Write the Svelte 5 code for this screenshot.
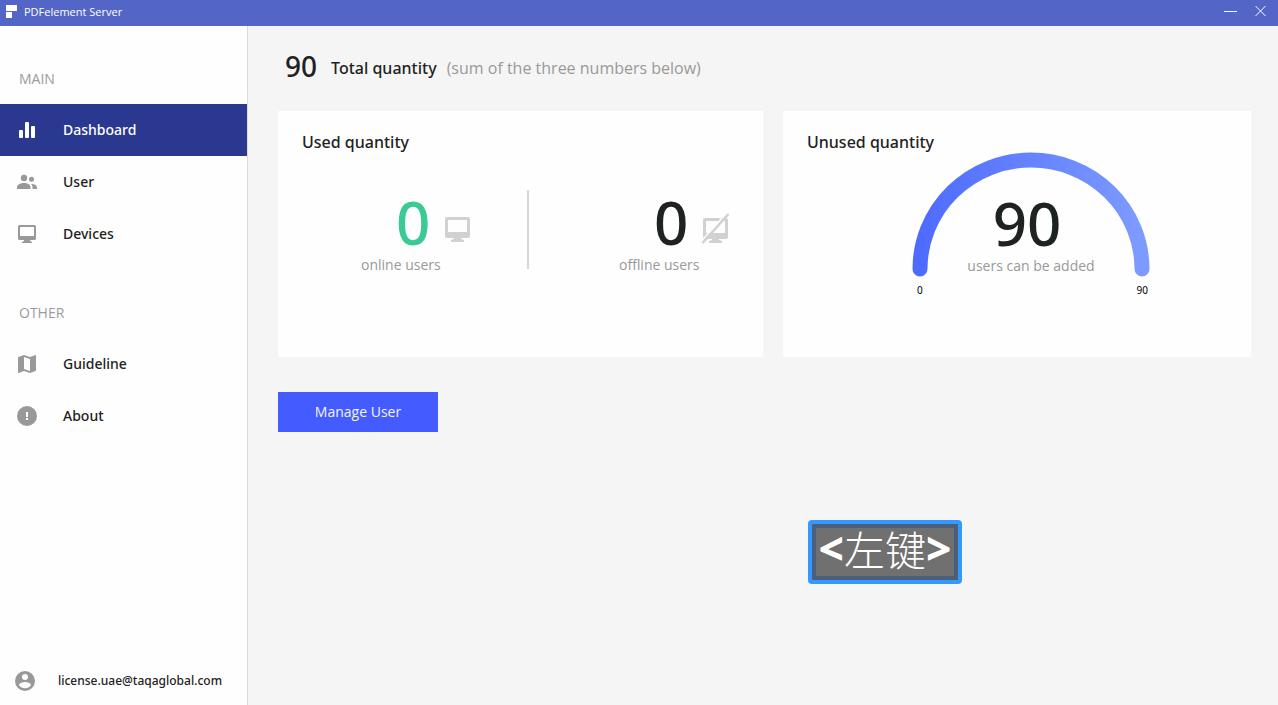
<script>
  const mainLinks = [
    { label: 'Dashboard', icon: 'chart', active: true },
    { label: 'User', icon: 'people' },
    { label: 'Devices', icon: 'monitor' }
  ];
  const otherLinks = [
    { label: 'Guideline', icon: 'map' },
    { label: 'About', icon: 'alert' }
  ];
  const online = 0;
  const offline = 0;
  const unused = 90;
  const total = online + offline + unused;
</script>

{#snippet glyph(name)}
  <svg class="glyph" viewBox="0 0 24 24" aria-hidden="true">
    {#if name === 'chart'}
      <rect x="4" y="12" width="4" height="8" rx="1" />
      <rect x="10" y="4" width="4" height="16" rx="1" />
      <rect x="16" y="8" width="4" height="12" rx="1" />
    {:else if name === 'people'}
      <circle cx="9" cy="8" r="3.2" />
      <circle cx="16.500" cy="9.300" r="2.500" />
      <path d="M2 19v-1.500C2 14.500 5 13 9 13s6.500 1.500 6.500 4.500V19z" />
      <path d="M16.700 14c3.300 0 5.300 1.500 5.300 3.700V19h-4.500v-1.500c0-1.500-.5-2.600-1.500-3.500z" />
    {:else if name === 'monitor'}
      <path fill-rule="evenodd" d="M4.500 3h15A1.500 1.500 0 0 1 21 4.500v12a1.500 1.500 0 0 1-1.500 1.500H15v1l2 1v1H7v-1l2-1v-1H4.500A1.500 1.500 0 0 1 3 16.500v-12A1.500 1.500 0 0 1 4.500 3zM5 5v9h14V5z" />
    {:else if name === 'map'}
      <path fill-rule="evenodd" d="M20.500 3l-5.500 2-6-2-5.600 1.900c-.2.1-.4.3-.4.500v15.100c0 .3.2.5.5.5L9 19l6 2 5.600-1.900c.2-.1.4-.3.4-.5V3.500c0-.3-.2-.5-.5-.5zM15 19l-6-2.100V5l6 2.100z" />
    {:else if name === 'alert'}
      <path fill-rule="evenodd" d="M12 2a10 10 0 1 0 0 20 10 10 0 0 0 0-20zm-1 6h2v5h-2zm0 6h2v2h-2z" />
    {:else}
      <path fill-rule="evenodd" d="M12 2a10 10 0 1 0 0 20 10 10 0 0 0 0-20zm0 3a3 3 0 1 1 0 6 3 3 0 0 1 0-6zm0 14.200a7.200 7.200 0 0 1-6-3.220c.03-1.990 4-3.080 6-3.080s5.970 1.090 6 3.080a7.200 7.200 0 0 1-6 3.220z" />
    {/if}
  </svg>
{/snippet}

{#snippet links(items)}
  <ul>
    {#each items as item}
      <li>
        <a href="#{item.label.toLowerCase()}" class:active={item.active} aria-current={item.active ? 'page' : undefined}>
          {@render glyph(item.icon)}
          <span>{item.label}</span>
        </a>
      </li>
    {/each}
  </ul>
{/snippet}

<div class="window">
  <header class="titlebar">
    <svg class="logo" viewBox="0 0 12 13" aria-hidden="true">
      <path d="M0 0h11v6H0zM0 7h6v6H0z" fill="#fff" />
    </svg>
    <span class="app-name">PDFelement Server</span>
    <button aria-label="Minimize">
      <svg viewBox="0 0 14 14"><path d="M0 6.500h13" /></svg>
    </button>
    <button aria-label="Close">
      <svg viewBox="0 0 14 14"><path d="M1.500 1l10 10M11.500 1L1.500 11" /></svg>
    </button>
  </header>

  <div class="body">
    <nav class="sidebar">
      <h2>MAIN</h2>
      {@render links(mainLinks)}
      <h2 class="second">OTHER</h2>
      {@render links(otherLinks)}
      <div class="account">
        {@render glyph('account')}
        <span>license.uae@taqaglobal.com</span>
      </div>
    </nav>

    <main>
      <div class="summary">
        <strong>{total}</strong>
        <h1>Total quantity</h1>
        <span>(sum of the three numbers below)</span>
      </div>

      <div class="cards">
        <section class="card">
          <h3>Used quantity</h3>
          <div class="stats">
            <div class="stat">
              <div class="figure">
                <span class="number online">{online}</span>
                <svg class="device" viewBox="0 0 30 32" aria-hidden="true">
                  <path fill-rule="evenodd" d="M3 4h21a2 2 0 0 1 2 2v17a2 2 0 0 1-2 2h-7v1l3 1v2H7v-2l3-1v-1H3a2 2 0 0 1-2-2V6a2 2 0 0 1 2-2zM4 7v12h19V7z" />
                </svg>
              </div>
              <p>online users</p>
            </div>
            <div class="divider"></div>
            <div class="stat">
              <div class="figure">
                <span class="number">{offline}</span>
                <svg class="device" viewBox="0 0 30 32" aria-hidden="true">
                  <path fill-rule="evenodd" d="M3 5h21a2 2 0 0 1 2 2v17a2 2 0 0 1-2 2h-7v1l3 1v2H7v-2l3-1v-1H3a2 2 0 0 1-2-2V7a2 2 0 0 1 2-2zM4 8v12h19V8z" />
                  <path d="M-1 28.500L25 -.500" stroke="#fefefe" stroke-width="1.500" />
                  <path d="M.5 30L26.500 1" stroke="#d1d1d1" stroke-width="2.600" />
                </svg>
              </div>
              <p>offline users</p>
            </div>
          </div>
        </section>

        <section class="card unused">
          <h3>Unused quantity</h3>
          <div class="gauge">
            <svg viewBox="0 0 238 124" aria-hidden="true">
              <defs>
                <linearGradient id="arc">
                  <stop offset="0" stop-color="#4e6bff" />
                  <stop offset="1" stop-color="#7d9bff" />
                </linearGradient>
              </defs>
              <path d="M8 116A111 109 0 0 1 230 116" fill="none" stroke="url(#arc)" stroke-width="15" stroke-linecap="round" />
            </svg>
            <div class="reading">
              <span class="number">{unused}</span>
              <p>users can be added</p>
            </div>
            <div class="scale"><span>0</span><span>{unused}</span></div>
          </div>
        </section>
      </div>

      <button class="manage">Manage User</button>
    </main>
  </div>

  <div class="key-hint"><b>&lt;</b><span lang="zh">左键</span><b>&gt;</b></div>
</div>

<style>
  :global(body) {
    margin: 0;
  }
  .window {
    position: relative;
    display: flex;
    flex-direction: column;
    min-height: 100vh;
    background: #f5f5f5;
    color: #1f2222;
    font-family: "Noto Sans", sans-serif;
  }
  .titlebar {
    display: flex;
    align-items: center;
    box-sizing: border-box;
    height: 26px;
    padding: 0 10px 2px 6px;
    background: #5465c8;
    color: #fff;
  }
  .logo {
    width: 12px;
    height: 13px;
    margin: 0 6px 2px 0;
  }
  .app-name {
    flex: 1;
    font: 400 11px/22px "Open Sans", sans-serif;
  }
  .titlebar button {
    display: flex;
    margin-left: 16px;
    padding: 0;
    border: 0;
    background: none;
  }
  .titlebar button svg {
    width: 14px;
    height: 14px;
    fill: none;
    stroke: #fff;
  }
  .body {
    display: flex;
    flex: 1;
  }
  .sidebar {
    display: flex;
    flex-direction: column;
    box-sizing: border-box;
    flex: 0 0 248px;
    padding-top: 42px;
    border-right: 1px solid #dcdcdc;
    background: #fefefe;
  }
  h1, h2, h3, p, ul {
    margin: 0;
    padding: 0;
    list-style: none;
  }
  h2 {
    padding: 0 19px;
    margin-bottom: 14px;
    color: #999ba0;
    font: 400 14px/22px "Open Sans", sans-serif;
  }
  h2.second {
    margin-top: 42px;
  }
  .sidebar a {
    display: flex;
    align-items: center;
    gap: 24px;
    height: 52px;
    padding-left: 15px;
    color: #1f2222;
    font-size: 14px;
    font-weight: 500;
    line-height: 20px;
    text-decoration: none;
  }
  .sidebar a span {
    line-height: 21px;
    padding-bottom: 1px;
  }
  .sidebar a.active {
    background: #2a388f;
    color: #fff;
  }
  .glyph {
    width: 24px;
    height: 24px;
    fill: #999;
  }
  .active .glyph {
    fill: #fff;
  }
  .account {
    display: flex;
    align-items: center;
    gap: 21px;
    margin-top: auto;
    padding: 0 13px 12px;
    font-size: 12px;
    font-weight: 500;
  }
  .account span {
    padding-bottom: 2px;
  }
  main {
    flex: 1;
    padding: 20px 27px 30px 30px;
  }
  .summary {
    display: flex;
    align-items: flex-start;
    height: 65px;
    padding-left: 7px;
  }
  .summary strong {
    margin-right: 14px;
    font-size: 28px;
    font-weight: 500;
    line-height: 40px;
  }
  h1, h3 {
    font-size: 16px;
    font-weight: 500;
    line-height: 22px;
  }
  .summary h1,
  .summary span {
    padding-top: 11px;
  }
  .summary span {
    margin-left: 10px;
    color: #999;
    font: 400 16px/22px "Open Sans", sans-serif;
  }
  .cards {
    display: grid;
    grid-template-columns: 485fr 468fr;
    gap: 20px;
  }
  .card {
    box-sizing: border-box;
    min-height: 246px;
    padding-top: 20px;
    background: #fefefe;
  }
  h3 {
    padding: 0 24px;
  }
  .stats {
    display: grid;
    grid-template-columns: 249fr 2px 234fr;
    margin-top: 37px;
  }
  .divider {
    height: 79px;
    background: #d8d8d8;
  }
  .stat {
    padding-left: 83px;
  }
  .divider + .stat {
    padding-left: 90px;
  }
  .figure {
    display: flex;
    align-items: center;
    height: 64px;
    padding-left: 35px;
    gap: 14px;
  }
  .number {
    font-size: 60px;
    font-weight: 500;
    line-height: 64px;
  }
  .online {
    color: #3acb93;
  }
  .device {
    width: 30px;
    height: 32px;
    margin-top: 13px;
    fill: #d1d1d1;
    overflow: visible;
  }
  p {
    color: #999;
    font: 400 14px/22px "Open Sans", sans-serif;
  }
  .gauge {
    display: grid;
    justify-content: center;
    width: 238px;
    margin: 0 auto;
    padding-left: 28px;
  }
  .gauge svg {
    grid-area: 1 / 1;
    width: 238px;
    height: 124px;
    overflow: visible;
  }
  .reading {
    grid-area: 1 / 1;
    align-self: end;
    text-align: center;
  }
  .reading .number {
    display: block;
    margin-right: 8px;
  }
  .scale {
    display: flex;
    justify-content: space-between;
    padding: 6px 2px 0 5px;
    color: #000;
    font: 10px/14px "Noto Sans", sans-serif;
  }
  .manage {
    display: block;
    width: 160px;
    height: 40px;
    margin-top: 35px;
    padding: 0;
    border: 0;
    background: #445bff;
    color: #f4f5ff;
    font: 400 14px/20px "Open Sans", sans-serif;
  }
  .key-hint {
    position: absolute;
    left: 808px;
    top: 520px;
    display: flex;
    align-items: center;
    justify-content: center;
    box-sizing: border-box;
    width: 154px;
    height: 64px;
    padding-bottom: 8px;
    border: 4px solid #39f;
    border-radius: 4px;
    background: #707070;
    box-shadow: inset 0 0 0 4px #4b6078;
    color: #fff;
    font: 300 41px/44px "Noto Sans CJK SC", sans-serif;
  }
  .key-hint b {
    font: 800 44px/48px "Noto Sans", sans-serif;
  }
</style>
